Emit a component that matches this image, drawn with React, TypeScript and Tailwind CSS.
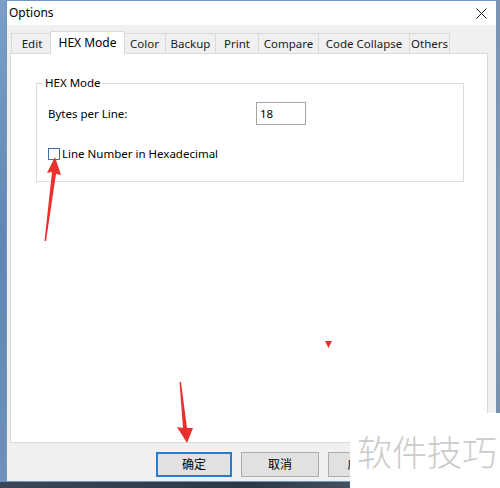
import React from "react";

const tabs = [
  { label: "Edit", w: 41 },
  { label: "HEX Mode", w: 71, active: true },
  { label: "Color", w: 42 },
  { label: "Backup", w: 50 },
  { label: "Print", w: 43 },
  { label: "Compare", w: 60 },
  { label: "Code Collapse", w: 91 },
  { label: "Others", w: 41 },
];

function Tab({ label, w, active }: { label: string; w: number; active?: boolean }) {
  if (active) {
    return (
      <div
        className="relative z-10 -mx-[2px] -mb-px flex h-[23px] items-center justify-center border border-b-0 border-[#d9d9d9] bg-white text-[12px] text-black"
        style={{ width: w + 4 }}
      >
        {label}
      </div>
    );
  }
  return (
    <div
      className="flex h-[20px] items-center justify-center border border-b-0 border-r-0 border-[#d9d9d9] bg-[#f0f0f0] text-[11.5px] text-[#1a1a1a] last:border-r"
      style={{ width: w }}
    >
      {label}
    </div>
  );
}

export default function App() {
  return (
    <div className="relative flex h-[488px] w-[500px] flex-col overflow-hidden bg-[#3c4a5c] font-['Noto_Sans','Noto_Sans_CJK_SC',sans-serif]">
      <div className="flex h-[482px]">
        {/* desktop strip left */}
        <div className="w-[6px] bg-gradient-to-b from-[#7d9fc6] via-[#5f86b2] to-[#6f90b8]" />

        {/* dialog */}
        <div className="flex w-[491px] flex-col border border-[#6f95c0] bg-[#f0f0f0]">
          <div className="flex h-[24px] items-center justify-between bg-white pl-[2px] pr-[9px]">
            <span className="text-[12px] text-black">Options</span>
            <svg width="11" height="11" viewBox="0 0 11 11">
              <path d="M0.5 0.5 L10.5 10.5 M10.5 0.5 L0.5 10.5" stroke="#222" strokeWidth="1" />
            </svg>
          </div>

          <div className="flex flex-1 flex-col pl-[3px] pr-[8px] pt-[7px]">
            {/* tab strip */}
            <div className="flex h-[21px] items-end pl-[1px]">
              {tabs.map((t) => (
                <Tab key={t.label} {...t} />
              ))}
            </div>

            {/* tab panel */}
            <div className="h-[390px] border border-[#d9d9d9] bg-white pl-[25px] pt-[29px]">
              <div className="relative h-[99px] w-[428px] border border-[#dcdcdc]">
                <span className="absolute -top-[10px] left-[6px] bg-white px-[2px] text-[11.5px] text-black">HEX Mode</span>
                <div className="flex items-center pl-[11px] pt-[18px]">
                  <span className="w-[208px] text-[11.5px] text-black">Bytes per Line:</span>
                  <div className="flex h-[23px] w-[50px] items-center border border-[#a5a5a5] bg-white pl-[3px] text-[11.5px] text-black">
                    18
                  </div>
                </div>
                <div className="flex items-center gap-[2px] pl-[11px] pt-[20px]">
                  <div className="h-[12px] w-[12px] border border-[#3f6f9f] bg-white" />
                  <span className="text-[11.5px] text-black">Line Number in Hexadecimal</span>
                </div>
              </div>
            </div>

            {/* buttons */}
            <div className="flex gap-[9px] pl-[146px] pt-[9px]">
              <button className="flex h-[25px] w-[76px] items-center justify-center border-2 border-[#2a7ad2] bg-[#e1e1e1] text-[12px] text-black">
                确定
              </button>
              <button className="flex h-[25px] w-[78px] items-center justify-center border border-[#adadad] bg-[#e1e1e1] text-[12px] text-black">
                取消
              </button>
              <button className="flex h-[25px] w-[78px] items-center justify-center border border-[#adadad] bg-[#e1e1e1] text-[12px] text-black">
                应用(A)
              </button>
            </div>
          </div>
        </div>

        {/* desktop strip right */}
        <div className="w-[3px] bg-gradient-to-b from-[#7e93ab] via-[#8a9bb0] to-[#7a8ca2]" />
      </div>
      <div className="flex-1 bg-gradient-to-r from-[#3a4657] via-[#2d3846] to-[#6b7482]" />

      {/* annotation arrows */}
      <svg className="pointer-events-none absolute left-0 top-0" width="500" height="488" viewBox="0 0 500 488">
        <path d="M44.5 241 L52 172 L47 173 L55 157 L61 175 L56 174 L46 241 Z" fill="#e8302d" />
        <path d="M179.5 382 L183 428 L177 427 L187 443 L193 428 L187 428 L181 382 Z" fill="#e8302d" />
        <path d="M325 341 L332 341 L328.5 348 Z" fill="#e8302d" />
      </svg>

      {/* watermark */}
      <div className="absolute left-[350px] top-[413px] flex h-[75px] w-[150px] items-center bg-white pl-[7px] pt-[4px]">
        <span className="whitespace-nowrap text-[35px] font-light leading-none text-[#cbcbcb]">软件技巧</span>
      </div>
    </div>
  );
}
